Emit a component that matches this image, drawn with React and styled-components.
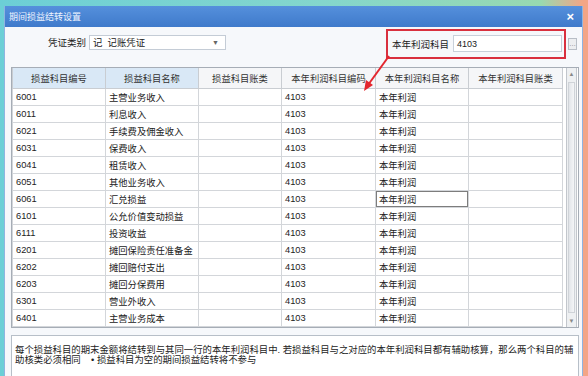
import styled, { createGlobalStyle } from "styled-components";

const GlobalStyle = createGlobalStyle`
  html, body {
    margin: 0;
    width: 588px;
    height: 376px;
    overflow: hidden;
  }
  body {
    background: linear-gradient(90deg, #6ccfd6 0%, #84d6cc 55%, #98d9b0 92%, #f3a586 99.2%);
    font-family: "Liberation Sans", "Noto Sans CJK SC", sans-serif;
  }
`;

const rows = [
  ["6001", "主营业务收入"],
  ["6011", "利息收入"],
  ["6021", "手续费及佣金收入"],
  ["6031", "保费收入"],
  ["6041", "租赁收入"],
  ["6051", "其他业务收入"],
  ["6061", "汇兑损益"],
  ["6101", "公允价值变动损益"],
  ["6111", "投资收益"],
  ["6201", "摊回保险责任准备金"],
  ["6202", "摊回赔付支出"],
  ["6203", "摊回分保费用"],
  ["6301", "营业外收入"],
  ["6401", "主营业务成本"],
];

const columns = [
  { title: "损益科目编号", width: 93, tint: true },
  { title: "损益科目名称", width: 93, tint: true },
  { title: "损益科目账类", width: 83 },
  { title: "本年利润科目编码", width: 94 },
  { title: "本年利润科目名称", width: 93 },
  { title: "本年利润科目账类", width: 94 },
];

const Window = styled.div`
  position: relative;
  margin: 6px 5px 0 4px;
  height: 370px;
  background: #f6f8fb;
  border-left: 1px solid #8fb4e0;
  border-right: 1px solid #8fb4e0;
  overflow: hidden;
`;

const TitleBar = styled.div`
  height: 21px;
  display: flex;
  align-items: center;
  justify-content: space-between;
  padding: 0 8px 0 4px;
  background: linear-gradient(#5590dc, #3f7acb);
  color: #eef4ff;
  font-size: 9px;
`;

const Close = styled.span`
  font-size: 13px;
  font-weight: bold;
  color: #fff;
  line-height: 1;
`;

const Content = styled.div`
  padding: 0 3px 0 6px;
`;

const TopRow = styled.div`
  height: 31px;
  margin-top: 1px;
  display: flex;
  align-items: center;
`;

const Label = styled.span`
  font-size: 9.5px;
  color: #222;
  white-space: nowrap;
`;

const VoucherGroup = styled.div`
  display: flex;
  align-items: center;
  gap: 3px;
  margin-left: 37px;
  margin-top: -3px;
`;

const Select = styled.div`
  width: 135px;
  height: 15px;
  display: flex;
  align-items: center;
  justify-content: space-between;
  padding: 0 6px 0 3px;
  box-sizing: border-box;
  width: 137px;
  background: #fff;
  border: 1px solid #c4ccd6;
  font-size: 9.4px;
  color: #222;
`;

const Caret = styled.span`
  font-size: 7px;
  color: #666;
`;

const RedFrame = styled.div`
  margin-left: auto;
  width: 180px;
  height: 30px;
  box-sizing: border-box;
  border: 2px solid #d9303e;
  display: flex;
  align-items: center;
  gap: 4px;
  padding: 0 2px 0 4px;
`;

const Input = styled.div`
  flex: 1;
  height: 17px;
  box-sizing: border-box;
  background: #fff;
  border: 1px solid #c8d0da;
  display: flex;
  align-items: center;
  padding-left: 3px;
  font-size: 9px;
  color: #222;
`;

const PickButton = styled.div`
  width: 9px;
  height: 12px;
  margin: 0 2px 0 2px;
  border: 1px solid #b8bec6;
  background: #eceef0;
  box-sizing: border-box;
  font-size: 7px;
  color: #777;
  display: flex;
  align-items: center;
  justify-content: center;
`;

const GridBox = styled.div`
  margin-top: 8px;
  display: flex;
  gap: 3px;
  border: 1px solid #a6adb6;
  height: 259px;
  overflow: hidden;
  background: #fff;
  padding-right: 1px;
`;

const Table = styled.table`
  width: 550px;
  table-layout: fixed;
  border-collapse: collapse;
  font-size: 9.3px;
  color: #222;
`;

const HeadCell = styled.th`
  height: 20px;
  padding: 0;
  font-weight: normal;
  color: #333;
  background: ${(p) => (p.$tint ? "#d9e8f6" : "#f5f6f8")};
  border: 1px solid #c9cdd2;
  border-top: none;
  white-space: nowrap;
`;

const Cell = styled.td`
  height: 16px;
  padding: 0 0 0 3px;
  border: 1px solid #d3d6da;
  white-space: nowrap;
  box-shadow: ${(p) => (p.$active ? "inset 0 0 0 1px #7d7d7d" : "none")};
`;

const Scrollbar = styled.div`
  width: 12px;
  display: flex;
  flex-direction: column;
  background: #eef0f2;
  border-left: 1px solid #c2c6cc;
  border-right: 1px solid #c2c6cc;
`;

const ScrollArrow = styled.div`
  height: 12px;
  display: flex;
  align-items: center;
  justify-content: center;
  font-size: 6px;
  color: #888;
`;

const Thumb = styled.div`
  flex: 1;
  margin: 2px 1px;
  background: linear-gradient(90deg, #e2e5e9, #f4f5f7);
  border: 1px solid #cfd3d8;
`;

const Note = styled.div`
  margin-top: 7px;
  height: 60px;
  background: #fff;
  border: 1px solid #b7bfc8;
  padding: 9px 2px 0 3px;
  font-size: 9.4px;
  line-height: 9.5px;
  color: #222;
  white-space: nowrap;
`;

const Overlay = styled.svg`
  position: absolute;
  left: 0;
  top: 0;
  pointer-events: none;
`;

export default function App() {
  return (
    <>
      <GlobalStyle />
      <Window>
        <TitleBar>
          <span>期间损益结转设置</span>
          <Close>×</Close>
        </TitleBar>

        <Content>
          <TopRow>
            <VoucherGroup>
              <Label>凭证类别</Label>
              <Select>
                <span>记&nbsp;&nbsp;记账凭证</span>
                <Caret>▼</Caret>
              </Select>
            </VoucherGroup>

            <RedFrame>
              <Label>本年利润科目</Label>
              <Input>4103</Input>
            </RedFrame>
            <PickButton>…</PickButton>
          </TopRow>

          <GridBox>
            <Table>
              <colgroup>
                {columns.map((c) => (
                  <col key={c.title} style={{ width: c.width }} />
                ))}
              </colgroup>
              <thead>
                <tr>
                  {columns.map((c) => (
                    <HeadCell key={c.title} $tint={c.tint}>
                      {c.title}
                    </HeadCell>
                  ))}
                </tr>
              </thead>
              <tbody>
                {rows.map(([code, name]) => (
                  <tr key={code}>
                    <Cell>{code}</Cell>
                    <Cell>{name}</Cell>
                    <Cell />
                    <Cell>4103</Cell>
                    <Cell $active={code === "6061"}>本年利润</Cell>
                    <Cell />
                  </tr>
                ))}
              </tbody>
            </Table>

            <Scrollbar>
              <ScrollArrow>▲</ScrollArrow>
              <Thumb />
              <ScrollArrow>▼</ScrollArrow>
            </Scrollbar>
          </GridBox>

          <Note>
            每个损益科目的期末金额将结转到与其同一行的本年利润科目中.&nbsp;若损益科目与之对应的本年利润科目都有辅助核算，那么两个科目的辅
            <br />
            助核类必须相同&nbsp;&nbsp;&nbsp;&nbsp;•&nbsp;损益科目为空的期间损益结转将不参与
          </Note>
        </Content>

        <Overlay width="579" height="370" viewBox="0 0 579 370">
          <line x1="384" y1="50" x2="363" y2="79" stroke="#e3262e" strokeWidth="2" />
          <polygon points="359,85 368,79 361,74" fill="#e3262e" />
        </Overlay>
      </Window>
    </>
  );
}
